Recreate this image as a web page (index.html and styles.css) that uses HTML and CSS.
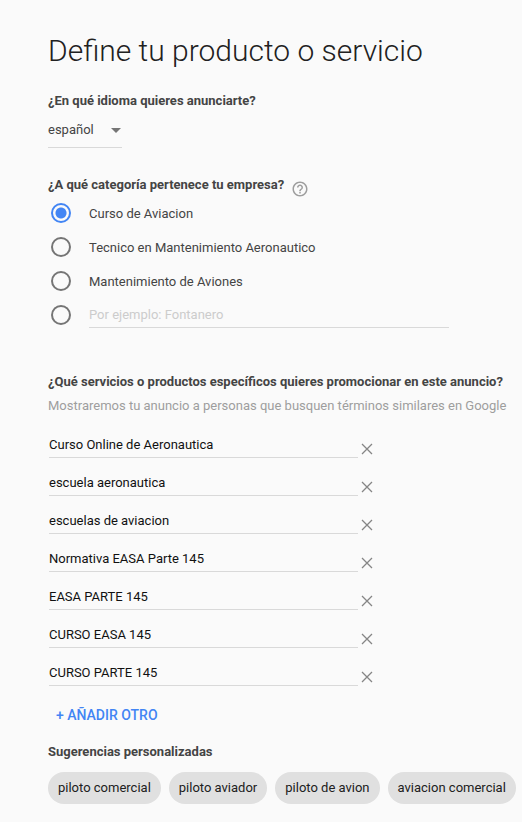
FILE: index.html
```html
<!DOCTYPE html>
<html lang="es">
<head>
    <meta charset="UTF-8">
    <meta name="viewport" content="width=device-width, initial-scale=1.0">
    <title>Define tu producto o servicio</title>
    <link rel="stylesheet" href="styles.css">
</head>
<body>
    <svg class="sprite" aria-hidden="true">
        <symbol id="icon-close" viewBox="0 0 12 12">
            <path d="M1 1l10 10M11 1L1 11" fill="none" stroke="currentColor" stroke-width="1.3"/>
        </symbol>
    </svg>

    <main class="page">
        <h1>Define tu producto o servicio</h1>

        <!-- Idioma -->
        <section class="language">
            <label class="question" for="language">¿En qué idioma quieres anunciarte?</label>
            <div class="select-wrap">
                <select id="language" class="select">
                    <option>español</option>
                </select>
            </div>
        </section>

        <!-- Categoría -->
        <section class="category">
            <div class="question-row">
                <h2 class="question" id="category-title">¿A qué categoría pertenece tu empresa?</h2>
                <button type="button" class="help" aria-label="Ayuda">
                    <svg viewBox="0 0 24 24" width="18" height="18" fill="currentColor">
                        <path d="M11 18h2v-2h-2v2zm1-16C6.480 2 2 6.480 2 12s4.480 10 10 10 10-4.480 10-10S17.520 2 12 2zm0 18c-4.410 0-8-3.590-8-8s3.590-8 8-8 8 3.590 8 8-3.590 8-8 8zm0-14c-2.210 0-4 1.790-4 4h2c0-1.100.9-2 2-2s2 .9 2 2c0 2-3 1.750-3 5h2c0-2.250 3-2.500 3-5 0-2.210-1.790-4-4-4z"/>
                    </svg>
                </button>
            </div>
            <div class="radio-list" role="radiogroup" aria-labelledby="category-title">
                <label class="radio-row">
                    <input type="radio" name="category" class="radio" checked>
                    <span class="radio-label">Curso de Aviacion</span>
                </label>
                <label class="radio-row">
                    <input type="radio" name="category" class="radio">
                    <span class="radio-label">Tecnico en Mantenimiento Aeronautico</span>
                </label>
                <label class="radio-row">
                    <input type="radio" name="category" class="radio">
                    <span class="radio-label">Mantenimiento de Aviones</span>
                </label>
                <div class="radio-row">
                    <input type="radio" name="category" class="radio" aria-label="Otra categoría">
                    <input type="text" class="text-input custom-input" placeholder="Por ejemplo: Fontanero" aria-label="Categoría">
                </div>
            </div>
        </section>

        <!-- Servicios o productos -->
        <section class="services">
            <h2 class="question" id="services-title">¿Qué servicios o productos específicos quieres promocionar en este anuncio?</h2>
            <p class="hint">Mostraremos tu anuncio a personas que busquen términos similares en Google</p>
            <ul class="keywords">
                <li class="keyword">
                    <input type="text" class="text-input" value="Curso Online de Aeronautica" aria-labelledby="services-title">
                    <button type="button" class="remove" aria-label="Eliminar"><svg width="12" height="12"><use href="#icon-close"/></svg></button>
                </li>
                <li class="keyword">
                    <input type="text" class="text-input" value="escuela aeronautica" aria-labelledby="services-title">
                    <button type="button" class="remove" aria-label="Eliminar"><svg width="12" height="12"><use href="#icon-close"/></svg></button>
                </li>
                <li class="keyword">
                    <input type="text" class="text-input" value="escuelas de aviacion" aria-labelledby="services-title">
                    <button type="button" class="remove" aria-label="Eliminar"><svg width="12" height="12"><use href="#icon-close"/></svg></button>
                </li>
                <li class="keyword">
                    <input type="text" class="text-input" value="Normativa EASA Parte 145" aria-labelledby="services-title">
                    <button type="button" class="remove" aria-label="Eliminar"><svg width="12" height="12"><use href="#icon-close"/></svg></button>
                </li>
                <li class="keyword">
                    <input type="text" class="text-input" value="EASA PARTE 145" aria-labelledby="services-title">
                    <button type="button" class="remove" aria-label="Eliminar"><svg width="12" height="12"><use href="#icon-close"/></svg></button>
                </li>
                <li class="keyword">
                    <input type="text" class="text-input" value="CURSO EASA 145" aria-labelledby="services-title">
                    <button type="button" class="remove" aria-label="Eliminar"><svg width="12" height="12"><use href="#icon-close"/></svg></button>
                </li>
                <li class="keyword">
                    <input type="text" class="text-input" value="CURSO PARTE 145" aria-labelledby="services-title">
                    <button type="button" class="remove" aria-label="Eliminar"><svg width="12" height="12"><use href="#icon-close"/></svg></button>
                </li>
            </ul>
            <button type="button" class="add-button">+ AÑADIR OTRO</button>
        </section>

        <!-- Sugerencias -->
        <section class="suggestions">
            <h2 class="question">Sugerencias personalizadas</h2>
            <div class="chips">
                <button type="button" class="chip">piloto comercial</button>
                <button type="button" class="chip">piloto aviador</button>
                <button type="button" class="chip">piloto de avion</button>
                <button type="button" class="chip">aviacion comercial</button>
            </div>
        </section>
    </main>
</body>
</html>
```

FILE: styles.css
```css
:root {
    --bg-color: #fafafa;
    --text-color: #444444;
    --line-color: #d9d9d9;
    --accent: #4285f4;
}
* {
    box-sizing: border-box;
}
body {
    margin: 0;
    background: var(--bg-color);
    color: var(--text-color);
    font-family: Roboto, "Liberation Sans", sans-serif;
    font-size: 13px;
    line-height: 20px;
}
button, input, select {
    font: inherit;
    color: inherit;
    margin: 0;
    padding: 0;
    border: 0;
    background: none;
}
button {
    cursor: pointer;
}
.sprite {
    display: none;
}
.page {
    padding: 31px 4px 18px 48px;
}
h1 {
    margin: 0 0 20px;
    font-size: 30px;
    font-weight: 300;
    line-height: 40px;
    color: #212121;
}
.question {
    display: block;
    margin: 0;
    font-size: 13px;
    font-weight: 700;
    line-height: 20px;
}

/* Idioma */
.select-wrap {
    position: relative;
    width: 74px;
    margin-top: 1px;
}
.select-wrap::after {
    content: "";
    position: absolute;
    right: 1px;
    top: 16px;
    border: 5px solid transparent;
    border-top-color: #757575;
    border-bottom: 0;
    pointer-events: none;
}
.select {
    appearance: none;
    display: block;
    width: 100%;
    height: 36px;
    border-bottom: 1px solid var(--line-color);
    border-radius: 0;
}

/* Categoría */
.category {
    margin-top: 27px;
}
.question-row {
    display: flex;
    align-items: flex-start;
    gap: 7px;
    height: 21px;
}
.help {
    display: flex;
    padding-top: 5px;
    color: #9e9e9e;
}
.radio-row {
    display: flex;
    align-items: center;
    gap: 18px;
    height: 34px;
    padding-left: 3px;
}
.radio-label {
    padding-top: 2px;
}
.radio {
    appearance: none;
    flex: none;
    width: 20px;
    height: 20px;
    border: 2px solid #757575;
    border-radius: 50%;
}
.radio:checked {
    border-color: var(--accent);
    background: radial-gradient(circle, var(--accent) 5px, transparent 6px);
}
.text-input {
    flex: 1;
    min-width: 0;
    height: 28px;
    padding-top: 2px;
    border-bottom: 1px solid var(--line-color);
    color: #111111;
    outline: none;
}
.custom-input {
    max-width: 360px;
    height: 26px;
    padding-top: 0;
}
.text-input::placeholder {
    color: #cccccc;
    opacity: 1;
}

/* Servicios */
.services {
    margin-top: 40px;
}
.hint {
    margin: 4px 0 14px;
    color: #9e9e9e;
}
.keywords {
    display: grid;
    gap: 10px;
    max-width: 325px;
    margin: 0;
    padding: 0 0 0 1px;
    list-style: none;
}
.keyword {
    display: flex;
    gap: 3px;
}
.remove {
    display: flex;
    align-items: center;
    padding-top: 10px;
    color: #858585;
}
.add-button {
    display: block;
    height: 36px;
    margin: 11px 0 9px;
    padding: 0 8px;
    font-size: 14px;
    font-weight: 500;
    color: var(--accent);
}

/* Sugerencias */
.chips {
    display: flex;
    flex-wrap: wrap;
    gap: 8px;
    margin-top: 10px;
}
.chip {
    height: 32px;
    padding: 0 10px;
    border-radius: 16px;
    background: #e0e0e0;
    color: #212121;
}
```
